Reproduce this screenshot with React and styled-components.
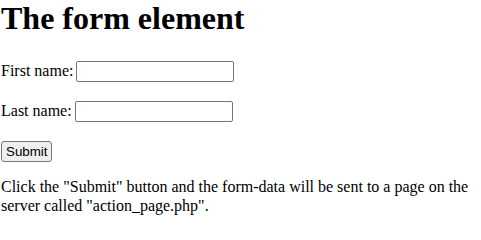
import React from "react";
import styled, { createGlobalStyle } from "styled-components";

const GlobalStyle = createGlobalStyle`
  body {
    margin: 0;
    padding: 0 1px;
    background: #ffffff;
    color: #000000;
    font-family: "Liberation Serif", "Times New Roman", serif;
    font-size: 16px;
  }
`;

const Title = styled.h1`
  font-size: 32px;
  font-weight: bold;
  margin: 0 0 23px;
`;

const Form = styled.form`
  margin: 0;
`;

const Field = styled.div`
  display: flex;
  align-items: center;
  height: 22px;
  margin-bottom: 18px;
`;

const Label = styled.label`
  margin-right: 3px;
`;

const TextInput = styled.input`
  box-sizing: border-box;
  width: 158px;
  height: 21px;
  padding: 1px 2px;
  border: 1px solid #767676;
  border-radius: 2px;
  font-family: "Liberation Sans", Arial, sans-serif;
  font-size: 13.33px;
  background: #ffffff;
`;

const SubmitButton = styled.button`
  box-sizing: border-box;
  height: 21px;
  margin-top: 1px;
  padding: 1px 4px;
  border: 1px solid #767676;
  border-radius: 3px;
  background: #efefef;
  color: #000000;
  font-family: "Liberation Sans", Arial, sans-serif;
  font-size: 13.33px;
`;

const Note = styled.p`
  margin: 15px 0 0;
  line-height: 19px;
`;

export default function App() {
  return (
    <>
      <GlobalStyle />
      <Title>The form element</Title>
      <Form action="/action_page.php" onSubmit={(e) => e.preventDefault()}>
        <Field>
          <Label htmlFor="fname">First name:</Label>
          <TextInput type="text" id="fname" name="fname" />
        </Field>
        <Field>
          <Label htmlFor="lname">Last name:</Label>
          <TextInput type="text" id="lname" name="lname" />
        </Field>
        <SubmitButton type="submit">Submit</SubmitButton>
      </Form>
      <Note>
        Click the "Submit" button and the form-data will be sent to a page on
        the server called "action_page.php".
      </Note>
    </>
  );
}
